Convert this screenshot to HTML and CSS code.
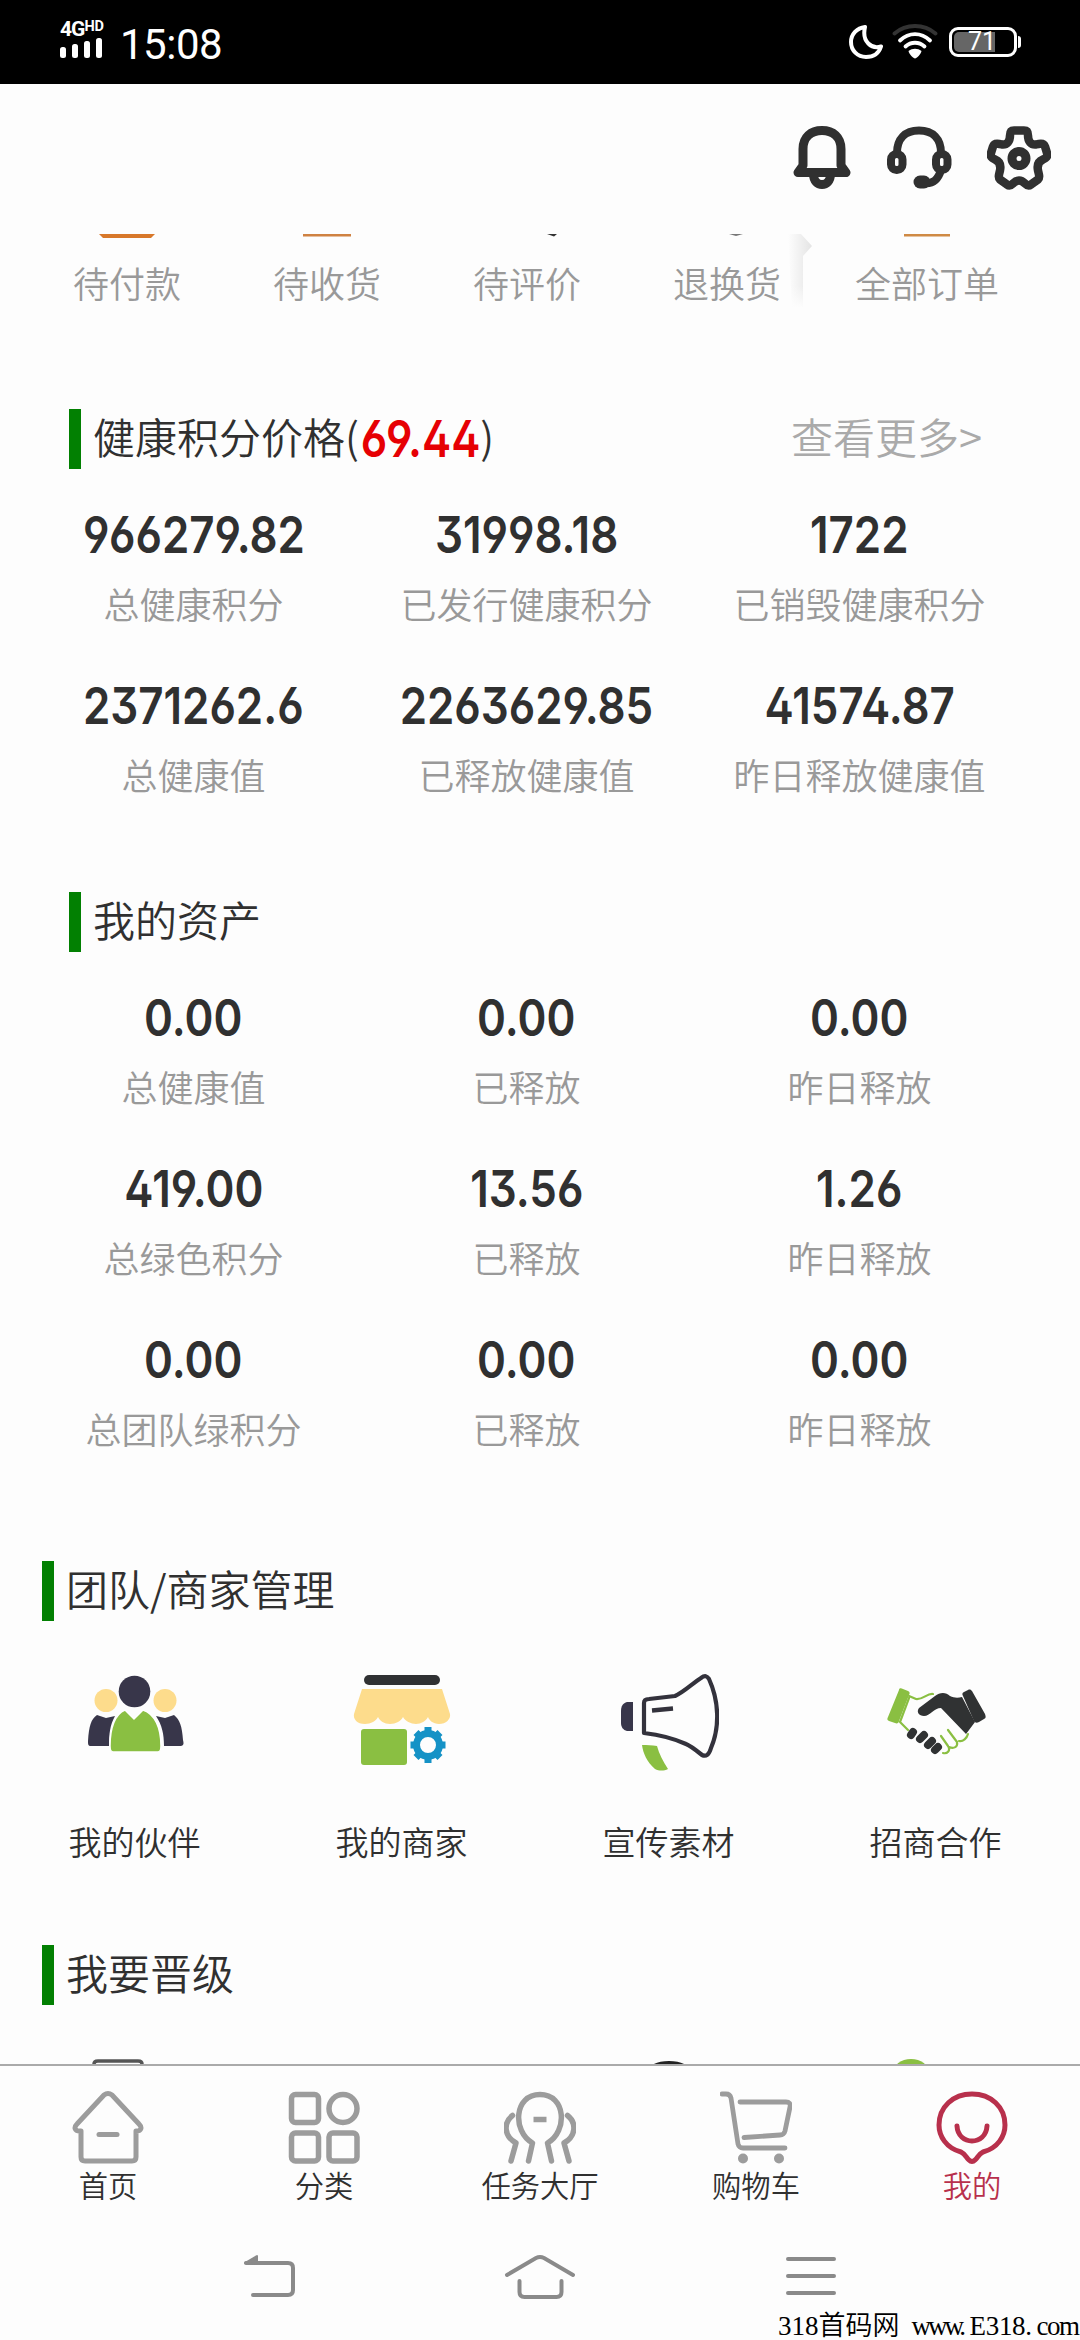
FILE: index.html
```html
<!DOCTYPE html>
<html lang="zh-CN">
<head>
<meta charset="utf-8">
<title>我的</title>
<link rel="stylesheet" href="styles.css">
</head>
<body>
<div class="phone">
  <header class="status">
    <div class="status-left">
      <div class="signal">
        <div class="net">4G<span class="hd">HD</span></div>
        <svg width="43" height="21" viewBox="0 0 43 21" fill="#fff"><rect x="0" y="9" width="6" height="11" rx="2.500"/><rect x="12" y="6" width="6" height="14" rx="2.500"/><rect x="24" y="3" width="6" height="17" rx="2.500"/><rect x="36" y="0" width="6" height="20" rx="2.500"/></svg>
      </div>
      <div class="clock">15:08</div>
    </div>
    <div class="status-right">
      <svg width="34" height="34" viewBox="0 0 34 34" fill="none" stroke="#fff" stroke-width="4" stroke-linejoin="round"><path d="M16 2C8 3 2 9 2 17c0 8.500 6.500 15 15 15 7.500 0 13-4 15-10.500C23 24.500 12.500 17 16 2z"/></svg>
      <svg width="46" height="36" viewBox="0 0 46 36" fill="none" stroke-linecap="round" stroke-width="3.800"><path stroke="#333" d="M2.500 9.500C14-.5 32-.5 43.500 9.500"/><path stroke="#fff" d="M8 16.500C17 8 29 8 38 16.500M13.500 22.500C19 17.500 27 17.500 32.500 22.500"/><path fill="#fff" stroke="none" d="M16.500 27c4-3 9-3 13 0-.5 3-5 7.500-6.500 7.500S17 30 16.500 27z"/></svg>
      <div class="battery"><div class="cell"><i class="charge"></i><span class="pct">71</span></div><i class="cap"></i></div>
    </div>
  </header>

  <div class="toolbar">
    <svg width="58" height="66" viewBox="0 0 58 66" fill="none" stroke="#303030" stroke-width="9" stroke-linecap="round" stroke-linejoin="round"><path d="M5 46.500l5-7V23C10 11 18 4.500 29 4.500S48 11 48 23v16.500l5 7zM20.500 48c0 14 17 14 17 0"/></svg>
    <svg width="66" height="66" viewBox="0 0 66 66" fill="none" stroke="#303030" stroke-width="8" stroke-linecap="round"><path d="M11 27C11 13 19 4.500 33 4.500S55 13 55 27M55 44C52 54 47 58 38 57"/><rect x="5" y="28" width="11.500" height="16" rx="5.500"/><rect x="50" y="28" width="11.500" height="16" rx="5.500"/><path stroke-width="13" d="M34 56h4"/></svg>
    <svg width="64" height="66" viewBox="0 0 64 66" fill="none" stroke="#303030" stroke-width="8.500" stroke-linejoin="round"><path d="M27 4.500h10c3 0 4 2 4 5 0 6 3 9.500 8 9 5-1.500 8-1 9 2l2 6.500c1 4-1 5-4 6.500-5 2-6 6-5 11 1 4 2 7 0 9l-7 5c-2 1.500-4 1-6-1-4-4-8-4-12 0-2 2-4 2.500-6 1l-7-5c-2-2-1-5 0-9 1-5 0-9-5-11-3-1.500-5-2.500-4-6.500L6 20.500c1-3 4-3.500 9-2 5 .5 8-3 8-9 0-3 1-5 4-5z"/><circle cx="32" cy="32.500" r="7" stroke-width="9"/></svg>
  </div>

  <nav class="orders">
    <div class="order"><svg width="56" height="8"><path fill="#d8782a" d="M0 0h56l-4 4H4z"/></svg>待付款</div>
    <div class="order"><svg width="48" height="8"><path fill="#cf8242" d="M0 0h48v2.500H0z"/></svg>待收货</div>
    <div class="order"><svg width="60" height="8"><path fill="#333" d="M50 0h10l-3 2.500z"/></svg>待评价</div>
    <div class="order"><svg width="48" height="8"><path fill="#777" d="M26 0h14l-7 2z"/></svg>退换货</div>
    <div class="order"><svg width="46" height="8"><path fill="#cf8a45" d="M0 0h46v2.500H0z"/></svg>全部订单</div>
    <svg class="edge" width="26" height="74" viewBox="0 0 26 74"><defs><linearGradient id="e"><stop offset="0" stop-color="#fdfdfd"/><stop offset="1" stop-color="#e4e4e4"/></linearGradient><linearGradient id="f" x2="0" y2="1"><stop offset=".7" stop-color="#fdfdfd" stop-opacity="0"/><stop offset="1" stop-color="#fdfdfd"/></linearGradient></defs><path fill="url(#e)" d="M0 0h13l11 12-9 10v52H4z"/><path fill="url(#f)" d="M0 0h26v74H0z"/></svg>
  </nav>

  <section class="stats price">
    <div class="head"><h2>健康积分价格(<b class="num">69.44</b>)</h2><a class="more">查看更多&gt;</a></div>
    <div class="grid">
      <div class="stat"><b class="num">966279.82</b><span>总健康积分</span></div>
      <div class="stat"><b class="num">31998.18</b><span>已发行健康积分</span></div>
      <div class="stat"><b class="num">1722</b><span>已销毁健康积分</span></div>
      <div class="stat"><b class="num">2371262.6</b><span>总健康值</span></div>
      <div class="stat"><b class="num">2263629.85</b><span>已释放健康值</span></div>
      <div class="stat"><b class="num">41574.87</b><span>昨日释放健康值</span></div>
    </div>
  </section>

  <section class="stats assets">
    <div class="head"><h2>我的资产</h2></div>
    <div class="grid">
      <div class="stat"><b class="num">0.00</b><span>总健康值</span></div>
      <div class="stat"><b class="num">0.00</b><span>已释放</span></div>
      <div class="stat"><b class="num">0.00</b><span>昨日释放</span></div>
      <div class="stat"><b class="num">419.00</b><span>总绿色积分</span></div>
      <div class="stat"><b class="num">13.56</b><span>已释放</span></div>
      <div class="stat"><b class="num">1.26</b><span>昨日释放</span></div>
      <div class="stat"><b class="num">0.00</b><span>总团队绿积分</span></div>
      <div class="stat"><b class="num">0.00</b><span>已释放</span></div>
      <div class="stat"><b class="num">0.00</b><span>昨日释放</span></div>
    </div>
  </section>

  <section class="team">
    <div class="head"><h2>团队/商家管理</h2></div>
    <div class="tools">
      <div class="tool">
        <svg width="100" height="100" viewBox="0 0 100 100"><g fill="#fddc8c"><circle cx="21" cy="28.500" r="11.500"/><circle cx="80" cy="28.500" r="11.500"/></g><g fill="#38364a"><circle cx="49.500" cy="19.500" r="15.800"/><path d="M6 74c-3 0-3-2-3-5 1-15 3-22 9-26l9 3 9-2c-5 9-6 18-6 30z"/><path d="M94 74c5 0 5-2 4-6-1-14-3-20-9-25l-9 3-9-2c6 9 8 18 8 30z"/></g><path fill="#8abf42" stroke="#fff" stroke-width="1.500" d="M40 38l9 9 9-9c12 4 18 18 18 36 0 5-1 6-5 6H30c-4 0-5-1-5-6 0-18 5-32 15-36z"/></svg>
        <span>我的伙伴</span></div>
      <div class="tool">
        <svg width="100" height="100" viewBox="0 0 100 100"><rect x="12" y="3" width="76" height="10" rx="5" fill="#303133"/><path fill="#fddc8c" d="M10 17h80l8 25c1 5-4 10-11 10-6 0-10-4-11-7-2 4-7 7-12 7s-11-3-13-7c-2 4-7 7-13 7s-10-3-12-7c-2 4-7 7-13 7C5 52 1 47 2 42z"/><rect x="9" y="57" width="46" height="36" rx="3" fill="#8abf42"/><g stroke="#1592c6" fill="none"><circle cx="76" cy="73" r="11.500" stroke-width="7"/><path stroke-width="7" d="M76 55v6M76 85v6M58.500 73h5M88.500 73h5M64 60.500l4 4M84 81.500l4 4M88 60.500l-4 4M68 81.500l-4 4"/></g></svg>
        <span>我的商家</span></div>
      <div class="tool">
        <svg width="100" height="100" viewBox="0 0 100 100"><path fill="#38364a" d="M14 30v29H8c-4-1-6-4-6-8V39c0-5 2-8 6-9z"/><path fill="none" stroke="#33323c" stroke-width="4.200" stroke-linejoin="round" d="M25 61V31c0-3 2-4 5-4l26-3C65 20 74 11 82 6c4-3 6-2 8 1 10 22 11 48 2 69-2 7-5 9-9 7-5-4-11-9-16-11-11-5-25-9-42-11z"/><path stroke="#33323c" stroke-width="4.500" d="M33 38.500l21-2"/><path fill="#8abf42" d="M23 73c5 0 10 0 15 1 2 8 6 15 11 23-4 2-9 2-13 0-8-7-12-16-13-24z"/></svg>
        <span>宣传素材</span></div>
      <div class="tool">
        <svg width="100" height="100" viewBox="0 0 100 100"><path fill="#8abf42" d="M13 18c0-2 2-2 4-1l5 2c2 1 2 2 1 4L13 49c0 2-2 3-4 2l-6-2c-2-1-2-2-1-4z"/><path fill="none" stroke="#8abf42" stroke-width="2.200" stroke-linecap="round" stroke-linejoin="round" d="M23 24l7 3c7 1 11-6 17-5M23 26L14 50l8 8M55 64l7 10c3 5-1 8-5 7M62 58l9 12c1 5-3 7-8 5M73 69c4 1 8-3 9-7"/><path fill="#303233" d="M80 62L55 36c-7 0-11 8-17 8-5 0-8-4-5-8l16-12c5-4 11-4 15 0 4 2 8 2 12 1l13 25z"/><path fill="#303233" d="M77 24c-1-2-1-3 1-4l4-2c2-1 3 0 4 1l13 23c1 3 1 4-1 5l-5 3c-2 1-4 1-5-1z"/><g stroke="#303233" stroke-width="8" stroke-linecap="round"><path d="M25 63l2-3M34 67l4-4M42 73l4-4M49 78l3-3"/></g></svg>
        <span>招商合作</span></div>
    </div>
  </section>

  <section class="upgrade">
    <div class="head"><h2>我要晋级</h2></div>
    <div class="peek">
      <svg width="267" height="5"><path fill="none" stroke="#555" stroke-width="3.500" d="M94 7V5q0-3 4-3h40q4 0 4 3v3"/></svg>
      <svg width="267" height="5"></svg>
      <svg width="267" height="5"><ellipse cx="135" cy="13" rx="22" ry="11" fill="#222"/></svg>
      <svg width="267" height="5"><ellipse cx="110" cy="14" rx="18" ry="14" fill="#8abf42"/></svg>
    </div>
  </section>

  <nav class="tabs">
    <div class="tab"><svg width="72" height="74" viewBox="0 0 72 74" fill="none" stroke="#9c9c9c" stroke-width="5" stroke-linecap="round" stroke-linejoin="round"><path d="M8 41c-6 0-6-4-3-7L32 5q4-3 8 0l27 29c3 3 3 7-3 7v26q0 4-4 4H13q-4 0-4-4V41"/><path d="M27 44.500h18"/></svg>首页</div>
    <div class="tab"><svg width="72" height="74" viewBox="0 0 72 74" fill="none" stroke="#9c9c9c" stroke-width="5.500"><rect x="3.500" y="4.500" width="27" height="28" rx="4"/><circle cx="55" cy="18.500" r="14"/><rect x="3.500" y="43" width="27" height="28" rx="4"/><rect x="41" y="43" width="28" height="28" rx="4"/></svg>分类</div>
    <div class="tab"><svg width="72" height="74" viewBox="0 0 72 74" fill="none" stroke="#9c9c9c" stroke-width="5.500" stroke-linecap="round" stroke-linejoin="round"><path d="M24.500 71l4-18C8 41 10 4.500 36 4.500S64 41 43.500 53l4 18M7 71l5-18C0 46-1 33 8.500 25.500M65 71l-5-18C72 46 73 33 63.500 25.500"/><path stroke-linecap="butt" d="M29.500 29.500h13"/></svg>任务大厅</div>
    <div class="tab"><svg width="72" height="74" viewBox="0 0 72 74" fill="none" stroke="#9c9c9c" stroke-width="4.800" stroke-linecap="round" stroke-linejoin="round"><path d="M2 4h4q4 0 5 4l7 46q1 4 5 4h42M20 12h46q5 0 4 5l-5 24q-1 4-5 4l-36 2.500"/><circle cx="23" cy="68.500" r="5" fill="#9c9c9c" stroke="none"/><circle cx="59" cy="68.500" r="5" fill="#9c9c9c" stroke="none"/></svg>购物车</div>
    <div class="tab active"><svg width="72" height="74" viewBox="0 0 72 74" fill="none" stroke="#b8304c" stroke-width="5" stroke-linecap="round" stroke-linejoin="round"><path d="M25 62C10 58 3 46 3 35 3 17 17 4 36 4s33 13 33 31c0 11-7 23-22 27-4 2-5 5-8 8q-3 3-6 0c-3-3-4-6-8-8z"/><path d="M21 36c1 20 29 20 30 0"/></svg>我的</div>
  </nav>

  <footer class="sysnav">
    <svg width="52" height="44" viewBox="0 0 52 44" fill="none" stroke="#8a8a8a" stroke-width="4" stroke-linecap="round"><path d="M3 9h42q5 0 5 5v22q0 5-5 5H10"/><path fill="#8a8a8a" stroke-width="2" stroke-linejoin="round" d="M2 9L14 2v8z"/></svg>
    <svg width="72" height="46" viewBox="0 0 72 46" fill="none" stroke="#8a8a8a" stroke-width="4" stroke-linecap="round"><path d="M3 21L32 4q4-2 8 0l29 17M15.500 27v11q0 5 5 5h32q5 0 5-5V27"/></svg>
    <svg width="50" height="44" viewBox="0 0 50 44" stroke="#8a8a8a" stroke-width="4" stroke-linecap="round"><path d="M2 5h46M2 22h46M2 39h46"/></svg>
  </footer>
  <div class="mark"><span>318</span><span class="han">首码网</span><span class="www">www.</span><span class="dom">E318.</span><span class="com">com</span></div>
</div>
</body>
</html>
```
FILE: styles.css
```css
* { box-sizing: border-box; }
body { margin: 0; background: #fdfdfd; color: #303030; font-family: "Noto Sans CJK SC", sans-serif; font-weight: 350; }
svg { display: block; flex: none; }
.phone { position: relative; width: 1080px; height: 2340px; overflow: hidden; display: flex; flex-direction: column; }
.phone > * { flex: none; }

.status { height: 84px; background: #000; color: #fff; display: flex; justify-content: space-between; padding: 0 59px 0 60px; font-family: Roboto, sans-serif; }
.status-left { display: flex; gap: 15px; }
.signal { padding-top: 20px; width: 45px; }
.net { font-size: 21px; line-height: 18px; height: 18px; font-weight: 700; white-space: nowrap; letter-spacing: -1px; }
.net .hd { font-size: 14.5px; vertical-align: 5px; line-height: 1px; letter-spacing: 0; }
.clock { font-size: 42px; line-height: 50px; padding-top: 20px; font-weight: 400; letter-spacing: -0.5px; }
.status-right { display: flex; align-items: center; gap: 9px; }
.battery { display: flex; align-items: center; gap: 1px; margin-left: 2px; }
.cell { position: relative; width: 68px; height: 30px; border: 3px solid #fff; border-radius: 9px; display: flex; align-items: center; justify-content: center; padding-right: 2px; }
.charge { position: absolute; left: 2px; top: 2px; bottom: 2px; width: 41px; background: #666; border-radius: 5px 0 0 5px; }
.pct { position: relative; font-size: 25px; line-height: 24px; font-weight: 400; }
.cap { width: 3px; height: 12px; background: #fff; border-radius: 0 3px 3px 0; }

.toolbar { height: 150px; padding: 42px 29px 0 0; display: flex; justify-content: flex-end; gap: 35px; }

.orders { position: relative; display: grid; grid-template-columns: repeat(5, 200px); height: 175px; padding-left: 27px; }
.order { display: flex; flex-direction: column; align-items: center; gap: 13px; font-size: 36px; line-height: 54px; color: #999; }
.edge { position: absolute; left: 788px; top: 0; }

.head { display: flex; justify-content: space-between; align-items: flex-start; height: 60px; border-left: 12px solid #028002; padding-left: 12px; }
h2 { margin: 0; font-size: 42px; line-height: 54px; font-weight: 350; white-space: nowrap; }
.more { font-size: 42px; line-height: 54px; color: #aaa; }
.num { font-family: Inter, sans-serif; font-feature-settings: "ss01"; font-size: 51px; font-weight: 600; display: block; transform: scaleX(.86); }
h2 .num { display: inline-block; color: #e60004; line-height: 50px; margin: 0 -10px 0 -8px; transform: translateY(3px) scaleX(.86); }

.stats { padding: 0 53px 0 27px; }
.stats .head { margin: 0 45px 0 42px; }
.grid { display: grid; grid-template-columns: repeat(3, 333px); padding-top: 30px; }
.stat { height: 171px; display: flex; flex-direction: column; align-items: center; }
.stat .num { line-height: 71px; }
.stat span { font-size: 36px; line-height: 54px; margin-top: 6px; color: #999; white-space: nowrap; }
.price { height: 483px; }
.assets { height: 669px; }

.team .head, .upgrade .head { margin-left: 42px; }
.team { height: 384px; }
.tools { display: grid; grid-template-columns: repeat(4, 267px); padding-top: 51px; padding-left: 1px; }
.tool { display: flex; flex-direction: column; align-items: center; gap: 44px; font-size: 33px; line-height: 50px; }
.upgrade { height: 119px; display: flex; flex-direction: column; justify-content: space-between; }
.peek { display: flex; }

.tabs { height: 155px; border-top: 2px solid #aaa; display: grid; grid-template-columns: repeat(5, 1fr); padding-top: 24px; }
.tab { display: flex; flex-direction: column; align-items: center; font-size: 29.3px; line-height: 40px; }
.active { color: #b8304c; }
.sysnav { height: 121px; padding-top: 35px; display: grid; grid-template-columns: repeat(3, 271px); justify-content: center; justify-items: center; }
.mark { position: absolute; right: 0; bottom: 0; width: 302px; display: flex; align-items: flex-end; font: 27px/27px "Liberation Serif", serif; color: #000; white-space: nowrap; }
.han { font: 350 27px/32px "Noto Sans CJK SC", sans-serif; }
.www { letter-spacing: -3px; margin-left: 12px; width: 58px; }
.dom { width: 67px; letter-spacing: -.3px; }
.com { letter-spacing: -1.5px; width: 42px; }
```
